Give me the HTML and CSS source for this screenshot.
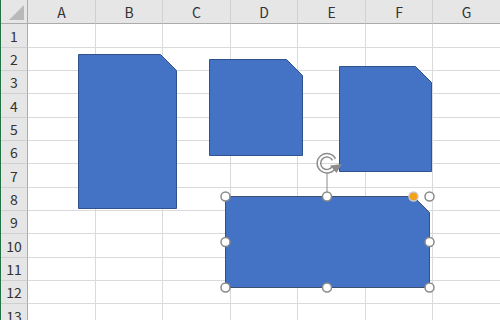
FILE: index.html
```html
<!DOCTYPE html>
<html>
<head>
<meta charset="utf-8">
<link rel="stylesheet" href="styles.css">
</head>
<body>
<div class="sheet">
  <div class="grid">
    <div class="corner"><span class="tri"></span></div>
    <div class="ch">A</div><div class="ch">B</div><div class="ch">C</div><div class="ch">D</div><div class="ch">E</div><div class="ch">F</div><div class="ch">G</div>
    <div class="rh">1</div><div class="c"></div><div class="c"></div><div class="c"></div><div class="c"></div><div class="c"></div><div class="c"></div><div class="c"></div>
    <div class="rh">2</div><div class="c"></div><div class="c"></div><div class="c"></div><div class="c"></div><div class="c"></div><div class="c"></div><div class="c"></div>
    <div class="rh">3</div><div class="c"></div><div class="c"></div><div class="c"></div><div class="c"></div><div class="c"></div><div class="c"></div><div class="c"></div>
    <div class="rh">4</div><div class="c"></div><div class="c"></div><div class="c"></div><div class="c"></div><div class="c"></div><div class="c"></div><div class="c"></div>
    <div class="rh">5</div><div class="c"></div><div class="c"></div><div class="c"></div><div class="c"></div><div class="c"></div><div class="c"></div><div class="c"></div>
    <div class="rh">6</div><div class="c"></div><div class="c"></div><div class="c"></div><div class="c"></div><div class="c"></div><div class="c"></div><div class="c"></div>
    <div class="rh">7</div><div class="c"></div><div class="c"></div><div class="c"></div><div class="c"></div><div class="c"></div><div class="c"></div><div class="c"></div>
    <div class="rh">8</div><div class="c"></div><div class="c"></div><div class="c"></div><div class="c"></div><div class="c"></div><div class="c"></div><div class="c"></div>
    <div class="rh">9</div><div class="c"></div><div class="c"></div><div class="c"></div><div class="c"></div><div class="c"></div><div class="c"></div><div class="c"></div>
    <div class="rh">10</div><div class="c"></div><div class="c"></div><div class="c"></div><div class="c"></div><div class="c"></div><div class="c"></div><div class="c"></div>
    <div class="rh">11</div><div class="c"></div><div class="c"></div><div class="c"></div><div class="c"></div><div class="c"></div><div class="c"></div><div class="c"></div>
    <div class="rh">12</div><div class="c"></div><div class="c"></div><div class="c"></div><div class="c"></div><div class="c"></div><div class="c"></div><div class="c"></div>
    <div class="rh">13</div><div class="c"></div><div class="c"></div><div class="c"></div><div class="c"></div><div class="c"></div><div class="c"></div><div class="c"></div>
  </div>
  <svg class="shapes" width="500" height="320" viewBox="0 0 500 320">
    <polygon class="shape" points="78.5,54.5 160.5,54.5 176.5,70.5 176.5,208.5 78.5,208.5"/>
    <polygon class="shape" points="209.5,59.5 286.5,59.5 302.5,75.5 302.5,155.5 209.5,155.5"/>
    <polygon class="shape" points="339.5,66.5 415.5,66.5 431.5,82.5 431.5,171.5 339.5,171.5"/>
    <polygon class="shape sel" points="225.5,196.5 413.5,196.5 429.5,212.5 429.5,287.5 225.5,287.5"/>
    <line class="stem" x1="327" y1="172" x2="327" y2="192"/>
    <g class="rot">
      <path class="rot-o" d="M334,167 A8,8 0 1 1 334,159.5"/>
      <path class="rot-i" d="M334,167 A8,8 0 1 1 334,159.5"/>
      <polygon class="rot-head" points="330,165.5 342,164 336.5,173"/>
    </g>
    <circle class="h" cx="225.5" cy="196.5" r="4.5"/>
    <circle class="h" cx="327" cy="196.5" r="4.5"/>
    <circle class="h" cx="429.5" cy="196.5" r="4.5"/>
    <circle class="h" cx="225.5" cy="242" r="4.5"/>
    <circle class="h" cx="429.5" cy="242" r="4.5"/>
    <circle class="h" cx="225.5" cy="287.5" r="4.5"/>
    <circle class="h" cx="327" cy="287.5" r="4.5"/>
    <circle class="h" cx="429.5" cy="287.5" r="4.5"/>
    <circle class="adj" cx="413.5" cy="196.5" r="4.5"/>
  </svg>
</div>
</body>
</html>
```

FILE: styles.css
```css
html, body {
  margin: 0;
  padding: 0;
  background: #ffffff;
}
.sheet {
  position: relative;
  width: 500px;
  height: 320px;
  overflow: hidden;
  border-left: 1px solid #217346;
  box-sizing: border-box;
}
.grid {
  display: grid;
  grid-template-columns: 27px 68px 67px 68px 67px 68px 67px 68px;
  grid-template-rows: 24px 24px 23px 23px 24px 23px 23px 24px 23px 23px 24px 23px 23px 24px;
  font-family: "Noto Sans CJK JP", "DejaVu Sans", sans-serif;
  font-size: 14px;
  color: #333;
}
.grid > div {
  box-sizing: border-box;
}
.corner {
  background: #e6e6e6;
  border-right: 1px solid #ababab;
  border-bottom: 1px solid #ababab;
  position: relative;
}
.tri {
  position: absolute;
  right: 3px;
  bottom: 3px;
  width: 0;
  height: 0;
  border-left: 15px solid transparent;
  border-bottom: 15px solid #b9b9b9;
}
.ch {
  background: #e6e6e6;
  border-right: 1px solid #d0d0d0;
  border-bottom: 1px solid #ababab;
  display: flex;
  align-items: center;
  justify-content: center;
  line-height: 1;
}
.rh {
  background: #e6e6e6;
  border-right: 1px solid #ababab;
  border-bottom: 1px solid #d0d0d0;
  display: flex;
  align-items: center;
  justify-content: center;
  line-height: 1;
}
.c {
  border-right: 1px solid #dadada;
  border-bottom: 1px solid #dadada;
}
.shapes {
  position: absolute;
  left: -1px;
  top: 0;
}
.shape {
  fill: #4472c4;
  stroke: #2f528f;
  stroke-width: 1;
}
.shape.sel {
  stroke: #3d4f6e;
}
.stem {
  stroke: #8c8c8c;
  stroke-width: 1;
}
.rot-o {
  fill: none;
  stroke: #8c8c8c;
  stroke-width: 5;
}
.rot-i {
  fill: none;
  stroke: #ffffff;
  stroke-width: 2;
}
.rot-head {
  fill: #8c8c8c;
}
.h {
  fill: #ffffff;
  stroke: #8a8a8a;
  stroke-width: 1.5;
}
.adj {
  fill: #f4a11a;
  stroke: #c8c8c8;
  stroke-width: 1.5;
}
```
